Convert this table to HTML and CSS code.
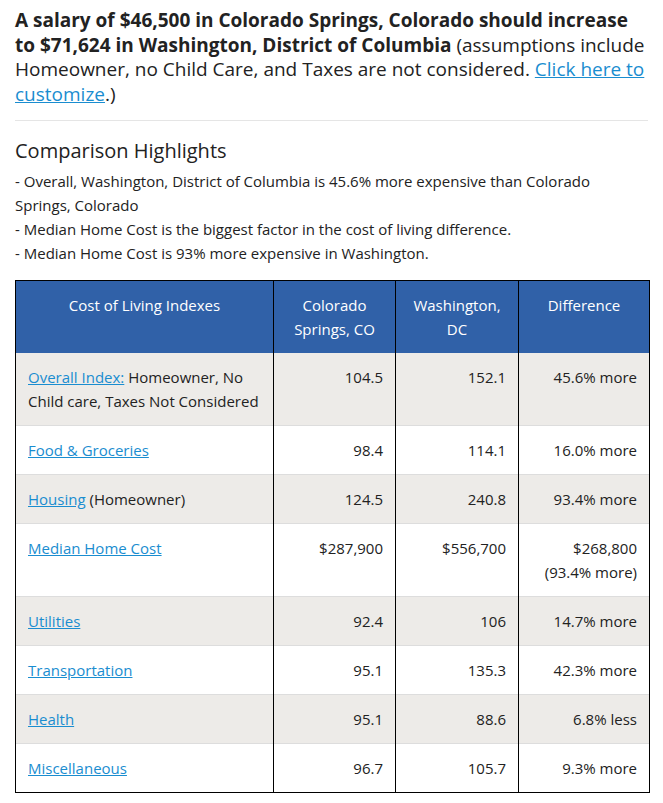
FILE: index.html
```html
<!DOCTYPE html>
<html lang="en">
<head>
<meta charset="utf-8">
<title>Cost of Living Comparison</title>
<link rel="stylesheet" href="styles.css">
</head>
<body>
<div class="page">
  <p class="summary"><strong>A salary of $46,500 in Colorado Springs, Colorado should increase to $71,624 in Washington, District of Columbia</strong> (assumptions include Homeowner, no Child Care, and Taxes are not considered. <a href="#">Click here to customize</a>.)</p>
  <hr class="divider">
  <h2 class="section-title">Comparison Highlights</h2>
  <div class="highlights">
    - Overall, Washington, District of Columbia is 45.6% more expensive than Colorado Springs, Colorado<br>
    - Median Home Cost is the biggest factor in the cost of living difference.<br>
    - Median Home Cost is 93% more expensive in Washington.
  </div>
  <table class="cost-table">
    <colgroup>
      <col class="c1"><col class="c2"><col class="c3"><col class="c4">
    </colgroup>
    <thead>
      <tr>
        <th>Cost of Living Indexes</th>
        <th>Colorado Springs, CO</th>
        <th>Washington, DC</th>
        <th>Difference</th>
      </tr>
    </thead>
    <tbody>
      <tr class="alt">
        <td><a href="#">Overall Index:</a> Homeowner, No Child care, Taxes Not Considered</td>
        <td class="num">104.5</td><td class="num">152.1</td><td class="num">45.6% more</td>
      </tr>
      <tr>
        <td><a href="#">Food &amp; Groceries</a></td>
        <td class="num">98.4</td><td class="num">114.1</td><td class="num">16.0% more</td>
      </tr>
      <tr class="alt">
        <td><a href="#">Housing</a> (Homeowner)</td>
        <td class="num">124.5</td><td class="num">240.8</td><td class="num">93.4% more</td>
      </tr>
      <tr>
        <td><a href="#">Median Home Cost</a></td>
        <td class="num">$287,900</td><td class="num">$556,700</td><td class="num">$268,800<br>(93.4% more)</td>
      </tr>
      <tr class="alt">
        <td><a href="#">Utilities</a></td>
        <td class="num">92.4</td><td class="num">106</td><td class="num">14.7% more</td>
      </tr>
      <tr>
        <td><a href="#">Transportation</a></td>
        <td class="num">95.1</td><td class="num">135.3</td><td class="num">42.3% more</td>
      </tr>
      <tr class="alt">
        <td><a href="#">Health</a></td>
        <td class="num">95.1</td><td class="num">88.6</td><td class="num">6.8% less</td>
      </tr>
      <tr>
        <td><a href="#">Miscellaneous</a></td>
        <td class="num">96.7</td><td class="num">105.7</td><td class="num">9.3% more</td>
      </tr>
    </tbody>
  </table>
</div>
</body>
</html>
```

FILE: styles.css
```css
html, body {
  margin: 0;
  padding: 0;
  background: #ffffff;
}
body {
  font-family: "Open Sans", "Noto Sans", sans-serif;
  color: #222222;
  font-size: 15px;
  line-height: 24px;
}
.page {
  padding: 8px 15px 10px;
}
a {
  color: #1a8dd0;
  text-decoration: underline;
}
.summary {
  margin: 0;
  font-size: 19px;
  line-height: 24.5px;
}
.summary strong {
  font-weight: 700;
}
.divider {
  border: 0;
  border-top: 1px solid #e5e5e5;
  margin: 14px 0 18px;
}
.section-title {
  margin: 0;
  font-size: 20px;
  font-weight: 400;
  line-height: 24px;
  margin-bottom: 6px;
}
.highlights {
  margin-bottom: 15px;
}
.cost-table {
  width: 634px;
  border-collapse: collapse;
  border: 1px solid #000;
  table-layout: fixed;
}
.c1 { width: 258px; }
.c2 { width: 122px; }
.c3 { width: 123px; }
.c4 { width: 131px; }
.cost-table th {
  background: #3061a8;
  color: #ffffff;
  font-weight: 400;
  text-align: center;
  vertical-align: top;
  padding: 12px;
  border-left: 1px solid #000;
  border-right: 1px solid #000;
}
.cost-table td {
  padding: 12px;
  vertical-align: top;
  border-left: 1px solid #000;
  border-right: 1px solid #000;
  border-top: 1px solid #dddddd;
}
.cost-table tbody tr:first-child td {
  border-top: 0;
}
.cost-table tr.alt td {
  background: #edebe8;
}
.cost-table td.num {
  text-align: right;
}
```
